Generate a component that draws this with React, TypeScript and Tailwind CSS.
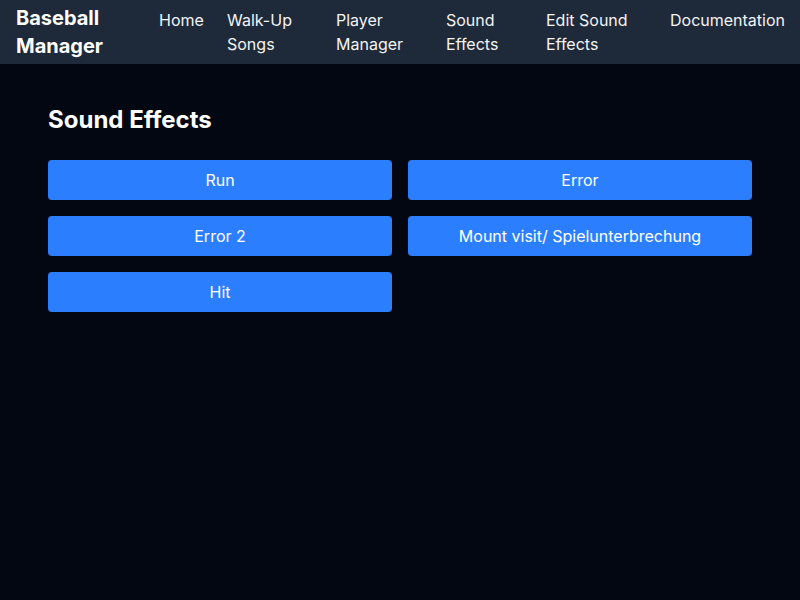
import React from 'react'

const links = [
    { label: 'Home', w: 'w-[44px]' },
    { label: 'Walk-Up Songs', w: 'w-[85px]' },
    { label: 'Player Manager', w: 'w-[86px]' },
    { label: 'Sound Effects', w: 'w-[76px]' },
    { label: 'Edit Sound Effects', w: 'w-[100px]' },
    { label: 'Documentation', w: 'w-[114px]' },
]

const sounds = ['Run', 'Error', 'Error 2', 'Mount visit/ Spielunterbrechung', 'Hit']

export default function App() {
    return (
        <div className="min-h-screen bg-[#030712] text-white" style={{ fontFamily: 'Inter, "Noto Sans", sans-serif' }}>
            <nav className="h-16 bg-[#1e2939] px-4 flex items-start justify-between">
                <div className="text-xl font-bold leading-7 pt-1 w-[90px]">Baseball Manager</div>
                <div className="flex gap-6 pt-2">
                    {links.map(l => (
                        <a key={l.label} href="#" className={`${l.w} shrink-0 text-base leading-6 text-gray-100`}>
                            {l.label}
                        </a>
                    ))}
                </div>
            </nav>

            <main className="px-12 pt-10">
                <h1 className="text-2xl font-bold leading-8 mb-6">Sound Effects</h1>
                <div className="grid grid-cols-2 gap-4">
                    {sounds.map(s => (
                        <button key={s} className="h-10 rounded bg-[#2b7fff] text-base text-white">
                            {s}
                        </button>
                    ))}
                </div>
            </main>
        </div>
    )
}
